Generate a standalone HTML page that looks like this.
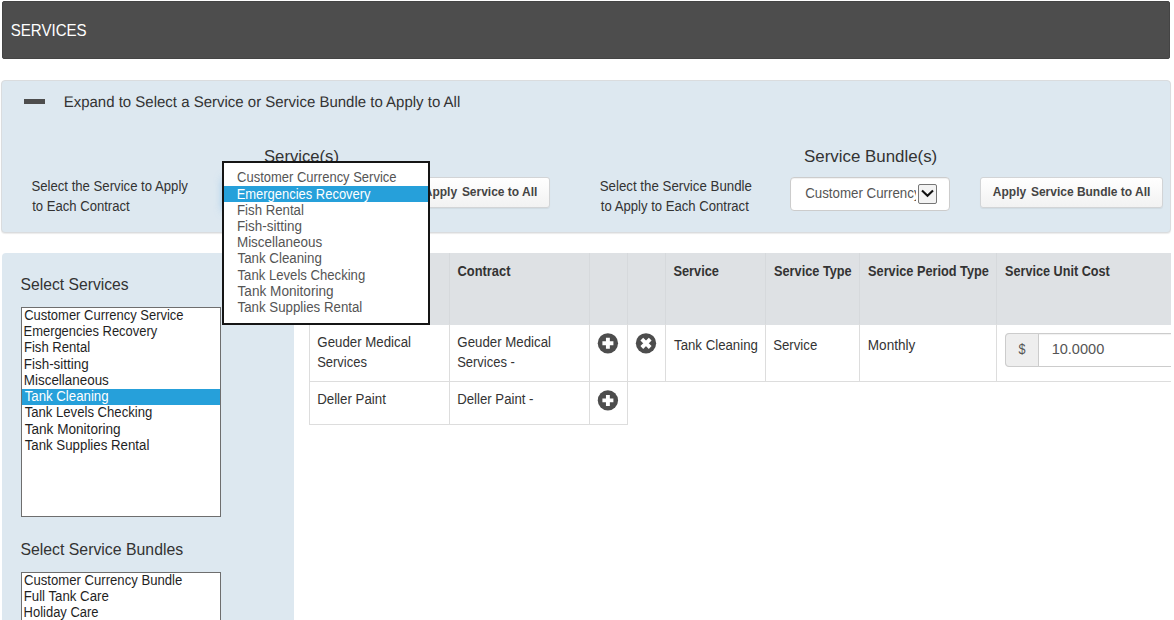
<!DOCTYPE html>
<html>
<head>
<meta charset="utf-8">
<title>Services</title>
<style>
html,body{margin:0;padding:0;}
body{width:1174px;height:620px;overflow:hidden;background:#fff;position:relative;
  font-family:"Liberation Sans",sans-serif;color:#333;}
.abs{position:absolute;box-sizing:border-box;}
.t{position:absolute;left:0;top:0;white-space:nowrap;transform-origin:0 0;line-height:normal;}
.btn{background:linear-gradient(#ffffff,#f2f2f2);border:1px solid #d2d4d6;border-radius:3px;
  box-shadow:0 1px 1px rgba(0,0,0,.06);}
.lb{background:#fff;border:1px solid #6e6e6e;}
.vl{position:absolute;width:1px;background:#ddd;}
.hl{position:absolute;height:1px;background:#ddd;}
</style>
</head>
<body>

<!-- header bar -->
<div class="abs" style="left:2px;top:1px;width:1168px;height:58px;background:#4d4d4d;border:1px solid #444;border-radius:2px;"></div>

<!-- apply-to-all panel -->
<div class="abs" style="left:1px;top:80px;width:1170px;height:153px;background:#dde8f0;border:1px solid #dadcde;border-radius:4px;box-shadow:0 1px 1px rgba(0,0,0,.08);"></div>
<div class="abs" style="left:24px;top:99px;width:21px;height:5px;background:#4d4d4d;"></div>

<!-- focused service select (hidden under dropdown; only glow shows) -->
<div class="abs" style="left:223px;top:178px;width:170px;height:33px;background:#fff;border:1px solid #66afe9;border-radius:4px;box-shadow:0 0 8px rgba(102,175,233,.6);"></div>
<!-- apply service button (partly hidden by dropdown) -->
<div class="abs btn" style="left:407px;top:177px;width:143px;height:31px;"></div>

<!-- bundle select -->
<div class="abs" style="left:790px;top:177px;width:160px;height:34px;background:#fff;border:1px solid #ccc;border-radius:4px;box-shadow:inset 0 1px 1px rgba(0,0,0,.06);"></div>
<div class="abs" style="left:918px;top:184px;width:19px;height:20px;border:1px solid #767676;background:#f3f3f3;border-radius:2px;"></div>
<svg class="abs" style="left:918px;top:184px;" width="19" height="20" viewBox="0 0 19 20"><path d="M4 6.5 L9.5 11.8 L15 6.5" fill="none" stroke="#111" stroke-width="2.1"/></svg>

<!-- apply bundle button -->
<div class="abs btn" style="left:980px;top:177px;width:183px;height:31px;"></div>

<!-- sidebar -->
<div class="abs" style="left:2px;top:253px;width:292px;height:380px;background:#dde8f0;border-radius:4px 0 0 0;"></div>
<div class="abs lb" style="left:21px;top:307px;width:200px;height:210px;"></div>
<div class="abs" style="left:22px;top:389px;width:198px;height:16px;background:#26a0da;"></div>
<div class="abs lb" style="left:21px;top:572px;width:200px;height:60px;"></div>

<!-- table -->
<div class="abs" style="left:309px;top:253px;width:862px;height:72px;background:#dee1e4;"></div>
<!-- header col separators (subtle) -->
<div class="vl" style="left:449px;top:253px;height:71px;background:#d6d9dc;"></div>
<div class="vl" style="left:589px;top:253px;height:71px;background:#d6d9dc;"></div>
<div class="vl" style="left:627px;top:253px;height:71px;background:#d6d9dc;"></div>
<div class="vl" style="left:665px;top:253px;height:71px;background:#d6d9dc;"></div>
<div class="vl" style="left:765px;top:253px;height:71px;background:#d6d9dc;"></div>
<div class="vl" style="left:859px;top:253px;height:71px;background:#d6d9dc;"></div>
<div class="vl" style="left:996px;top:253px;height:71px;background:#d6d9dc;"></div>
<!-- body borders -->
<div class="vl" style="left:309px;top:324px;height:101px;"></div>
<div class="vl" style="left:449px;top:324px;height:101px;"></div>
<div class="vl" style="left:589px;top:324px;height:101px;"></div>
<div class="vl" style="left:627px;top:324px;height:101px;"></div>
<div class="vl" style="left:665px;top:324px;height:58px;"></div>
<div class="vl" style="left:765px;top:324px;height:58px;"></div>
<div class="vl" style="left:859px;top:324px;height:58px;"></div>
<div class="vl" style="left:996px;top:324px;height:58px;"></div>
<div class="hl" style="left:309px;top:381px;width:862px;"></div>
<div class="hl" style="left:309px;top:424px;width:319px;"></div>

<!-- icons -->
<svg class="abs" style="left:595px;top:331px;" width="26" height="26" viewBox="0 0 26 26"><circle cx="12.9" cy="12.3" r="10.15" fill="#4d4d4d"/><path d="M7.4 12.3h11M12.9 6.8v11" stroke="#fff" stroke-width="3.9" fill="none"/></svg>
<svg class="abs" style="left:633px;top:331px;" width="26" height="26" viewBox="0 0 26 26"><circle cx="13" cy="12.3" r="10.15" fill="#4d4d4d"/><path d="M8.8 8.1l8.4 8.4M17.2 8.1l-8.4 8.4" stroke="#fff" stroke-width="3.9" fill="none"/></svg>
<svg class="abs" style="left:595px;top:388px;" width="26" height="26" viewBox="0 0 26 26"><circle cx="12.9" cy="12.4" r="10.15" fill="#4d4d4d"/><path d="M7.4 12.4h11M12.9 6.9v11" stroke="#fff" stroke-width="3.9" fill="none"/></svg>

<!-- input group -->
<div class="abs" style="left:1005px;top:333px;width:180px;height:34px;background:#fff;border:1px solid #ccc;border-radius:4px;box-shadow:inset 0 1px 1px rgba(0,0,0,.06);"></div>
<div class="abs" style="left:1005px;top:333px;width:34px;height:34px;background:#eee;border:1px solid #ccc;border-radius:4px 0 0 4px;"></div>
<div class="abs" style="left:1171px;top:240px;width:3px;height:200px;background:#fff;"></div>

<div class="t" id="t0" style="transform:translate(10.69px,21px) scale(0.8870,1);font-size:17px;color:#fff;">SERVICES</div>
<div class="t" id="t1" style="transform:translate(63.71px,94px) scale(0.9737,1);font-size:15.4px;text-rendering:geometricPrecision;">Expand to Select a Service or Service Bundle to Apply to All</div>
<div class="t" id="t2" style="transform:translate(264.01px,147px) scale(0.9794,1);font-size:17px;">Service(s)</div>
<div class="t" id="t3" style="transform:translate(31.40px,178px) scale(0.9399,1);font-size:14px;">Select the Service to Apply</div>
<div class="t" id="t4" style="transform:translate(32.13px,198px) scale(0.9358,1);font-size:14px;">to Each Contract</div>
<div class="t" id="t5" style="transform:translate(599.75px,178px) scale(0.9491,1);font-size:14px;">Select the Service Bundle</div>
<div class="t" id="t6" style="transform:translate(600.82px,198px) scale(0.9368,1);font-size:14px;">to Apply to Each Contract</div>
<div class="t" id="t7" style="transform:translate(804.02px,147px) scale(0.9930,1);font-size:17px;">Service Bundle(s)</div>
<div class="t" id="t8" style="transform:translate(20.56px,275px) scale(0.9221,1);font-size:17px;">Select Services</div>
<div class="t" id="t9" style="transform:translate(20.43px,540px) scale(0.9309,1);font-size:17px;">Select Service Bundles</div>
<div class="t" id="t10" style="transform:translate(24.19px,307px) scale(0.9270,1);font-size:14px;color:#1f1f1f;">Customer Currency Service</div>
<div class="t" id="t11" style="transform:translate(23.54px,323px) scale(0.9236,1);font-size:14px;color:#1f1f1f;">Emergencies Recovery</div>
<div class="t" id="t12" style="transform:translate(23.92px,339px) scale(0.9355,1);font-size:14px;color:#1f1f1f;">Fish Rental</div>
<div class="t" id="t13" style="transform:translate(23.81px,356px) scale(0.9576,1);font-size:14px;color:#1f1f1f;">Fish-sitting</div>
<div class="t" id="t14" style="transform:translate(23.81px,372px) scale(0.9582,1);font-size:14px;color:#1f1f1f;">Miscellaneous</div>
<div class="t" id="t15" style="transform:translate(24.64px,388px) scale(0.9460,1);font-size:14px;color:#fff;">Tank Cleaning</div>
<div class="t" id="t16" style="transform:translate(24.64px,404px) scale(0.9374,1);font-size:14px;color:#1f1f1f;">Tank Levels Checking</div>
<div class="t" id="t17" style="transform:translate(24.64px,421px) scale(0.9711,1);font-size:14px;color:#1f1f1f;">Tank Monitoring</div>
<div class="t" id="t18" style="transform:translate(24.64px,437px) scale(0.9483,1);font-size:14px;color:#1f1f1f;">Tank Supplies Rental</div>
<div class="t" id="t19" style="transform:translate(24.03px,572px) scale(0.9372,1);font-size:14px;color:#1f1f1f;">Customer Currency Bundle</div>
<div class="t" id="t20" style="transform:translate(23.74px,588px) scale(0.9449,1);font-size:14px;color:#1f1f1f;">Full Tank Care</div>
<div class="t" id="t21" style="transform:translate(23.61px,604px) scale(0.9261,1);font-size:14px;color:#1f1f1f;">Holiday Care</div>
<div class="t" id="t22" style="transform:translate(457.52px,263px) scale(0.9197,1);font-size:14px;font-weight:bold;">Contract</div>
<div class="t" id="t23" style="transform:translate(673.40px,263px) scale(0.9140,1);font-size:14px;font-weight:bold;">Service</div>
<div class="t" id="t24" style="transform:translate(774.04px,263px) scale(0.9095,1);font-size:14px;font-weight:bold;">Service Type</div>
<div class="t" id="t25" style="transform:translate(868.08px,263px) scale(0.9095,1);font-size:14px;font-weight:bold;">Service Period Type</div>
<div class="t" id="t26" style="transform:translate(1005.08px,263px) scale(0.9028,1);font-size:14px;font-weight:bold;">Service Unit Cost</div>
<div class="t" id="t27" style="transform:translate(317.60px,263px) scale(0.8661,1);font-size:14px;font-weight:bold;">Customer</div>
<div class="t" id="t28" style="transform:translate(317.31px,334px) scale(0.9479,1);font-size:14px;">Geuder Medical</div>
<div class="t" id="t29" style="transform:translate(317.15px,354px) scale(0.9264,1);font-size:14px;">Services</div>
<div class="t" id="t30" style="transform:translate(317.17px,391px) scale(0.9498,1);font-size:14px;">Deller Paint</div>
<div class="t" id="t31" style="transform:translate(457.31px,334px) scale(0.9479,1);font-size:14px;">Geuder Medical</div>
<div class="t" id="t32" style="transform:translate(457.15px,354px) scale(0.9268,1);font-size:14px;">Services -</div>
<div class="t" id="t33" style="transform:translate(457.22px,391px) scale(0.9421,1);font-size:14px;">Deller Paint -</div>
<div class="t" id="t34" style="transform:translate(674.05px,337px) scale(0.9444,1);font-size:14px;">Tank Cleaning</div>
<div class="t" id="t35" style="transform:translate(773.22px,337px) scale(0.9426,1);font-size:14px;">Service</div>
<div class="t" id="t36" style="transform:translate(867.82px,337px) scale(0.9691,1);font-size:14px;">Monthly</div>
<div class="t" id="t37" style="transform:translate(1018.61px,341px) scale(0.9011,1);font-size:14px;color:#555;">$</div>
<div class="t" id="t38" style="transform:translate(1051.63px,341px) scale(1.0398,1);font-size:14px;color:#555;">10.0000</div>
<div class="t" id="t39" style="transform:translate(992.85px,185px) scale(0.9981,1);font-size:12px;font-weight:bold;color:#444;">Apply <span style="margin-left:1.5px"></span>Service Bundle to All</div>
<div class="t" id="t40" style="transform:translate(423.78px,185px) scale(0.9981,1);font-size:12px;font-weight:bold;color:#444;">Apply <span style="margin-left:1.5px"></span>Service to All</div>
<div class="abs clip" style="left:800px;top:0;width:116px;height:620px;overflow:hidden;"><div class="t" id="t41" style="transform:translate(5.13px,185px) scale(0.9513,1);font-size:14px;color:#555;">Customer Currency Bundle</div></div>

<!-- open dropdown list -->
<div class="abs" style="left:222px;top:161px;width:208px;height:164px;background:#fff;border:2px solid #151515;"></div>
<div class="abs" style="left:224px;top:186px;width:204px;height:16px;background:#26a0da;"></div>
<div class="t" id="t42" style="transform:translate(237.11px,169px) scale(0.9269,1);font-size:14px;color:#555;">Customer Currency Service</div>
<div class="t" id="t43" style="transform:translate(236.64px,186px) scale(0.9255,1);font-size:14px;color:#fff;">Emergencies Recovery</div>
<div class="t" id="t44" style="transform:translate(237.01px,202px) scale(0.9444,1);font-size:14px;color:#555;">Fish Rental</div>
<div class="t" id="t45" style="transform:translate(236.91px,218px) scale(0.9601,1);font-size:14px;color:#555;">Fish-sitting</div>
<div class="t" id="t46" style="transform:translate(236.91px,234px) scale(0.9621,1);font-size:14px;color:#555;">Miscellaneous</div>
<div class="t" id="t47" style="transform:translate(237.56px,250px) scale(0.9502,1);font-size:14px;color:#555;">Tank Cleaning</div>
<div class="t" id="t48" style="transform:translate(237.56px,267px) scale(0.9373,1);font-size:14px;color:#555;">Tank Levels Checking</div>
<div class="t" id="t49" style="transform:translate(237.57px,283px) scale(0.9718,1);font-size:14px;color:#555;">Tank Monitoring</div>
<div class="t" id="t50" style="transform:translate(237.56px,299px) scale(0.9485,1);font-size:14px;color:#555;">Tank Supplies Rental</div>

</body>
</html>
